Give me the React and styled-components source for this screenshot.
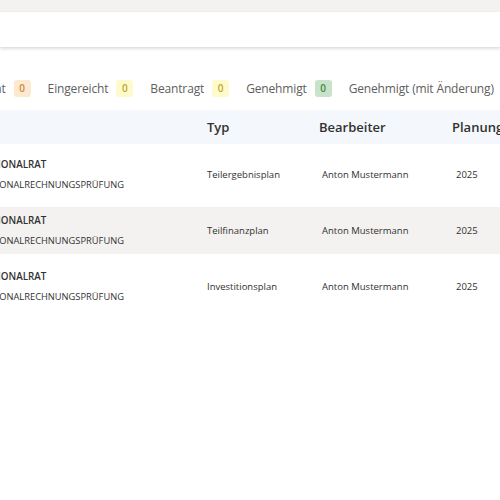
import React from 'react';
import styled, { createGlobalStyle } from 'styled-components';

const GlobalStyle = createGlobalStyle`
  html, body {
    margin: 0;
    padding: 0;
    background: #ffffff;
    font-family: "Open Sans", "Noto Sans", sans-serif;
    color: #323130;
    overflow: hidden;
  }
`;

const Page = styled.div`
  width: 500px;
  height: 500px;
  overflow: hidden;
  background: #ffffff;
`;

const TopBand = styled.div`
  height: 12px;
  background: #f3f2f1;
`;

const SearchBar = styled.div`
  height: 35px;
  background: #ffffff;
  box-shadow: 0 2px 3px rgba(0, 0, 0, 0.13), 0 0 1px rgba(0, 0, 0, 0.08);
  position: relative;
  z-index: 1;
`;

const StatusBar = styled.div`
  display: flex;
  align-items: center;
  gap: 17px;
  height: 20px;
  margin-top: 31px;
  margin-left: -50px;
  white-space: nowrap;
`;

const StatusItem = styled.div`
  display: flex;
  align-items: center;
  gap: 8px;
  font-size: 12px;
  letter-spacing: -0.15px;
  color: #605e5c;
`;

const badgeColors = {
  orange: { bg: '#fde8d0', fg: '#cf8a3c' },
  yellow: { bg: '#fdfbcc', fg: '#bfa532' },
  green: { bg: '#c9e2ca', fg: '#3f8a43' },
};

const Badge = styled.span`
  display: inline-flex;
  align-items: center;
  justify-content: center;
  width: 17px;
  height: 17px;
  border-radius: 3px;
  font-size: 10px;
  font-weight: 600;
  letter-spacing: 0;
  background: ${(p) => badgeColors[p.$tone].bg};
  color: ${(p) => badgeColors[p.$tone].fg};
`;

const Viewport = styled.div`
  overflow: hidden;
  margin-top: 12px;
`;

const Table = styled.div`
  margin-left: -40px;
  width: 600px;
`;

const columns = '247px 112px 133px 108px';

const HeaderRow = styled.div`
  display: grid;
  grid-template-columns: ${columns};
  align-items: center;
  height: 34px;
  background: #f4f8fc;
  font-size: 13px;
  font-weight: 600;
  color: #323130;
`;

const HeaderCell = styled.div`
  padding-left: ${(p) => p.$indent || 0}px;
  white-space: nowrap;
`;

const Rows = styled.div`
  padding-top: 3px;
`;

const Row = styled.div`
  padding: 4px 0 5px;
`;

const RowInner = styled.div`
  display: grid;
  grid-template-columns: ${columns};
  align-items: center;
  height: 47px;
  background: ${(p) => (p.$selected ? '#f3f2f1' : 'transparent')};
  font-size: 9.5px;
  color: #323130;
`;

const Cell = styled.div`
  padding-left: ${(p) => p.$indent || 0}px;
  white-space: nowrap;
`;

const NameCell = styled.div`
  padding-left: 19px;
  display: flex;
  flex-direction: column;
  gap: 7px;
  white-space: nowrap;
`;

const NameTitle = styled.span`
  font-weight: 600;
  font-size: 9.8px;
`;

const NameSub = styled.span`
  font-size: 9.3px;
`;

const statuses = [
  { label: 'Abgelehnt', tone: 'orange' },
  { label: 'Eingereicht', tone: 'yellow' },
  { label: 'Beantragt', tone: 'yellow' },
  { label: 'Genehmigt', tone: 'green' },
  { label: 'Genehmigt (mit Änderung)', tone: 'green' },
];

const rows = [
  { typ: 'Teilergebnisplan' },
  { typ: 'Teilfinanzplan', selected: true },
  { typ: 'Investitionsplan' },
];

export default function App() {
  return (
    <>
      <GlobalStyle />
      <Page>
        <TopBand />
        <SearchBar />
        <StatusBar>
          {statuses.map((s) => (
            <StatusItem key={s.label}>
              {s.label}
              <Badge $tone={s.tone}>0</Badge>
            </StatusItem>
          ))}
        </StatusBar>
        <Viewport>
          <Table>
            <HeaderRow>
              <HeaderCell>Name</HeaderCell>
              <HeaderCell>Typ</HeaderCell>
              <HeaderCell>Bearbeiter</HeaderCell>
              <HeaderCell>Planungsjahr</HeaderCell>
            </HeaderRow>
            <Rows>
              {rows.map((r) => (
                <Row key={r.typ}>
                  <RowInner $selected={r.selected}>
                    <NameCell>
                      <NameTitle>REGIONALRAT</NameTitle>
                      <NameSub>REGIONALRECHNUNGSPRÜFUNG</NameSub>
                    </NameCell>
                    <Cell>{r.typ}</Cell>
                    <Cell $indent={3}>Anton Mustermann</Cell>
                    <Cell $indent={4}>2025</Cell>
                  </RowInner>
                </Row>
              ))}
            </Rows>
          </Table>
        </Viewport>
      </Page>
    </>
  );
}
